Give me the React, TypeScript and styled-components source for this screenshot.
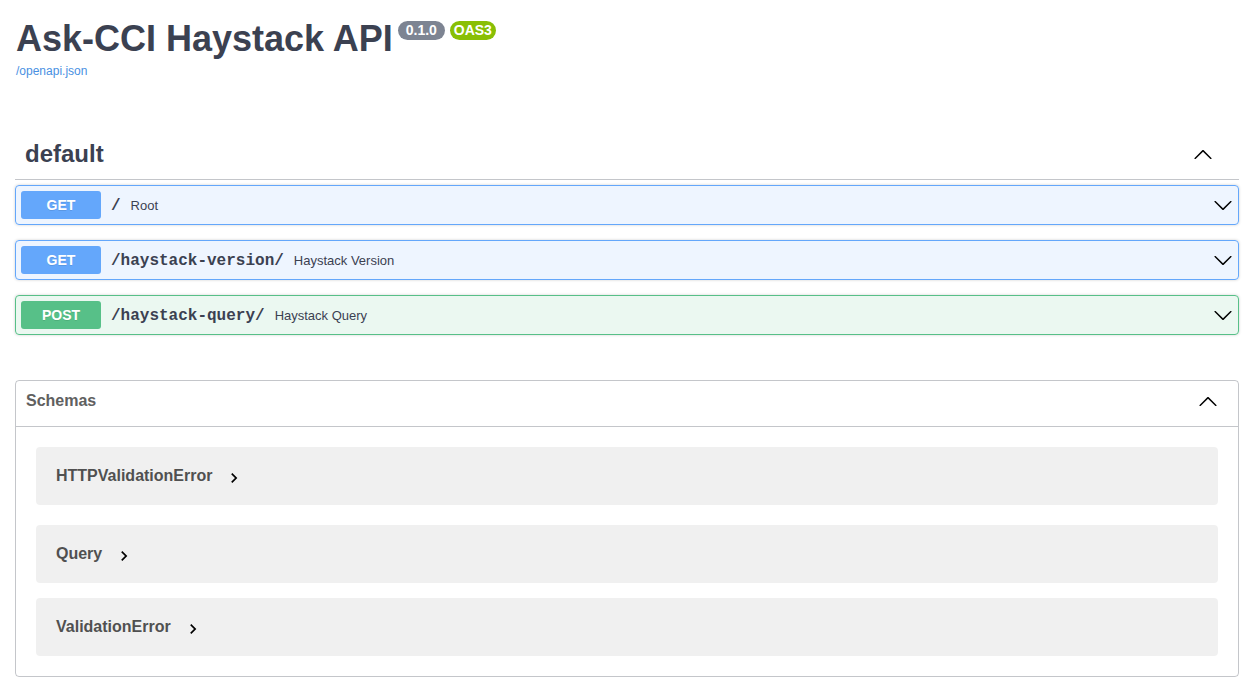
import styled, { createGlobalStyle } from "styled-components";

const GlobalStyle = createGlobalStyle`
  html, body {
    margin: 0;
    padding: 0;
    background: #fff;
  }
  body {
    font-family: "Liberation Sans", Arial, sans-serif;
    color: #3b4151;
  }
`;

const Wrapper = styled.div`
  display: flex;
  flex-direction: column;
  padding: 0 14px 0 15px;
`;

const Info = styled.div`
  display: flex;
  flex-direction: column;
  align-items: flex-start;
  margin-top: 18px;
  padding-left: 1px;
`;

const TitleRow = styled.h2`
  display: flex;
  align-items: flex-start;
  margin: 0;
  font-size: 36px;
  font-weight: 700;
  line-height: 42px;
  color: #3b4151;
`;

const Badge = styled.small<{ $tone: "version" | "oas" }>`
  display: inline-block;
  margin: 3px 0 0 5px;
  padding: 2px 4px;
  border-radius: 57px;
  background: ${(p) => (p.$tone === "oas" ? "#89bf04" : "#7d8492")};
  color: #fff;
  font-size: 14px;
  font-weight: 700;
  line-height: 15px;
  white-space: pre;
`;

const SpecLink = styled.a`
  margin-top: 4px;
  color: #4990e2;
  font-size: 12px;
  text-decoration: none;
`;

const TagHeader = styled.h3`
  display: flex;
  align-items: center;
  justify-content: space-between;
  margin: 51px 0 0;
  padding: 10px 26px 10px 10px;
  border-bottom: 1px solid rgba(59, 65, 81, 0.3);
  font-size: 24px;
  font-weight: 700;
  line-height: 30px;
  color: #3b4151;
`;

const OpList = styled.div`
  display: flex;
  flex-direction: column;
  gap: 15px;
  margin-top: 5px;
`;

const methodColors = {
  get: { main: "#64a7fb", bg: "rgba(97, 168, 254, 0.11)" },
  post: { main: "#57c088", bg: "rgba(73, 190, 130, 0.11)" },
};

type Method = keyof typeof methodColors;

const OpBlock = styled.div<{ $method: Method }>`
  display: flex;
  align-items: center;
  padding: 5px;
  border: 1px solid ${(p) => methodColors[p.$method].main};
  border-radius: 4px;
  background: ${(p) => methodColors[p.$method].bg};
  box-shadow: 0 0 3px rgba(0, 0, 0, 0.19);
`;

const MethodBadge = styled.span<{ $method: Method }>`
  flex: none;
  width: 80px;
  padding: 6px 0;
  border-radius: 3px;
  background: ${(p) => methodColors[p.$method].main};
  color: #fff;
  font-size: 14px;
  font-weight: 700;
  line-height: 16px;
  text-align: center;
  text-shadow: 0 1px 0 rgba(0, 0, 0, 0.1);
`;

const OpPath = styled.span`
  padding: 1px 10px 0;
  font-family: "Liberation Mono", "Courier New", monospace;
  font-size: 16px;
  font-weight: 700;
  color: #3b4151;
`;

const OpDesc = styled.span`
  flex: 1;
  font-size: 13px;
  color: #3b4151;
`;

const Arrow = styled.svg`
  flex: none;
  display: block;
`;

const ModelsSection = styled.section`
  margin-top: 45px;
  border: 1px solid rgba(59, 65, 81, 0.3);
  border-radius: 4px;
`;

const ModelsHeader = styled.h4`
  display: flex;
  align-items: center;
  justify-content: space-between;
  margin: 0;
  height: 20px;
  padding: 10px 20px 15px 10px;
  border-bottom: 1px solid rgba(59, 65, 81, 0.3);
  font-size: 16px;
  font-weight: 700;
  color: #606060;
`;

const ModelList = styled.div`
  padding: 20px;
`;

const ModelRow = styled.div`
  display: flex;
  align-items: center;
  height: 58px;
  padding: 0 20px;
  margin-bottom: 15px;
  border-radius: 4px;
  background: rgba(0, 0, 0, 0.06);

  &:first-child {
    margin-bottom: 20px;
  }
  &:last-child {
    margin-bottom: 0;
  }
`;

const ModelTitle = styled.span`
  font-size: 16px;
  font-weight: 700;
  color: #505050;
`;

const ModelToggle = styled.svg`
  display: block;
  margin: 4px 0 0 12px;
`;

const ChevronDown = () => (
  <Arrow width="20" height="20" viewBox="0 0 20 20" aria-hidden>
    <path
      fill="#000"
      d="M17.418 6.109c.272-.268.709-.268.979 0s.271.701 0 .969l-7.908 7.83c-.27.268-.707.268-.979 0l-7.908-7.83c-.27-.268-.27-.701 0-.969.271-.268.709-.268.979 0L10 13.25l7.418-7.141z"
    />
  </Arrow>
);

const ChevronUp = () => (
  <Arrow width="20" height="20" viewBox="0 0 20 20" aria-hidden>
    <path
      fill="#000"
      d="M17.418 14.908c.272.268.709.268.979 0s.271-.701 0-.969l-7.908-7.83c-.27-.268-.707-.268-.979 0l-7.908 7.83c-.27.268-.27.701 0 .969.271.268.709.268.979 0L10 7.767l7.418 7.141z"
    />
  </Arrow>
);

const ops: { method: Method; path: string; summary: string }[] = [
  { method: "get", path: "/", summary: "Root" },
  { method: "get", path: "/haystack-version/", summary: "Haystack Version" },
  { method: "post", path: "/haystack-query/", summary: "Haystack Query" },
];

const schemas = ["HTTPValidationError", "Query", "ValidationError"];

export default function App() {
  return (
    <>
      <GlobalStyle />
      <Wrapper>
        <Info>
          <TitleRow>
            <span>Ask-CCI Haystack API</span>
            <Badge $tone="version">{" 0.1.0 "}</Badge>
            <Badge $tone="oas">OAS3</Badge>
          </TitleRow>
          <SpecLink href="#">/openapi.json</SpecLink>
        </Info>

        <TagHeader>
          <span>default</span>
          <ChevronUp />
        </TagHeader>
        <OpList>
          {ops.map((op) => (
            <OpBlock key={op.path} $method={op.method}>
              <MethodBadge $method={op.method}>
                {op.method.toUpperCase()}
              </MethodBadge>
              <OpPath>{op.path}</OpPath>
              <OpDesc>{op.summary}</OpDesc>
              <ChevronDown />
            </OpBlock>
          ))}
        </OpList>

        <ModelsSection>
          <ModelsHeader>
            <span>Schemas</span>
            <ChevronUp />
          </ModelsHeader>
          <ModelList>
            {schemas.map((name) => (
              <ModelRow key={name}>
                <ModelTitle>{name}</ModelTitle>
                <ModelToggle width="20" height="20" viewBox="0 0 24 24" aria-hidden>
                  <path fill="#000" d="M10 6 8.59 7.41 13.17 12l-4.58 4.59L10 18l6-6z" />
                </ModelToggle>
              </ModelRow>
            ))}
          </ModelList>
        </ModelsSection>
      </Wrapper>
    </>
  );
}
